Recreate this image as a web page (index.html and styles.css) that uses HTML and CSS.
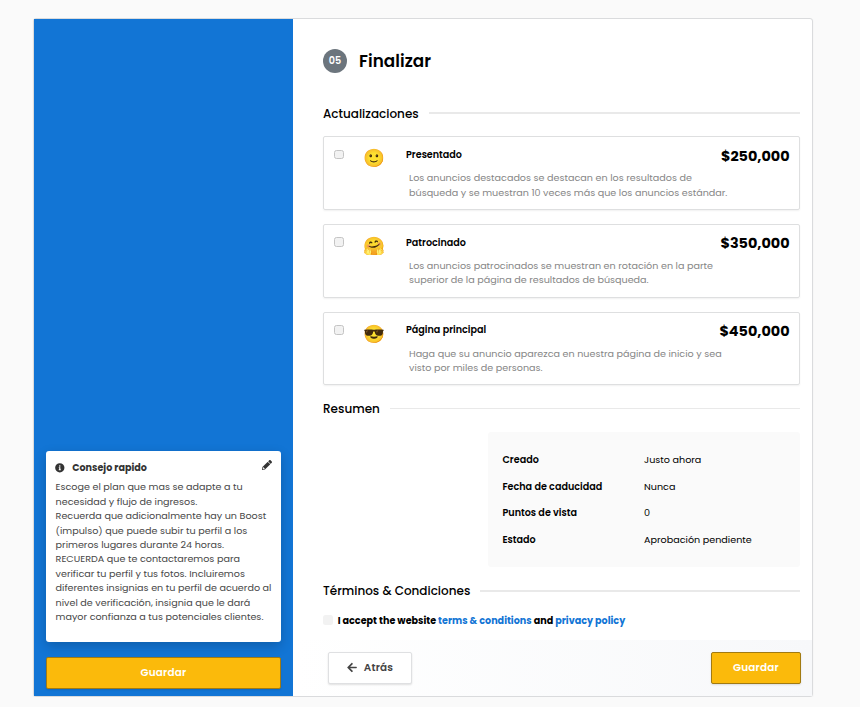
FILE: index.html
```html
<!DOCTYPE html>
<html lang="es">
<head>
<meta charset="utf-8">
<title>Finalizar</title>
<link rel="stylesheet" href="styles.css">
</head>
<body>
<div class="panel">
  <aside class="side">
    <div class="tip">
      <div class="tip-head">
        <svg class="info" viewBox="0 0 512 512"><path fill="currentColor" d="M256 8a248 248 0 1 0 0 496a248 248 0 1 0 0-496zm0 110a42 42 0 1 1 0 84a42 42 0 1 1 0-84zm56 254a12 12 0 0 1-12 12h-88a12 12 0 0 1-12-12v-24a12 12 0 0 1 12-12h12v-64h-12a12 12 0 0 1-12-12v-24a12 12 0 0 1 12-12h64a12 12 0 0 1 12 12v100h12a12 12 0 0 1 12 12z"/></svg>
        <b>Consejo rapido</b>
        <svg class="pencil" viewBox="0 0 512 512"><path fill="currentColor" d="M498 142l-46 46c-5 5-13 5-17 0L324 77c-5-5-5-12 0-17l46-46c19-19 49-19 68 0l60 60c19 19 19 49 0 68zM284 100L22 362 0 484c-3 16 12 30 28 28l122-22 262-262c5-5 5-13 0-17L301 100c-4-5-12-5-17 0zM88 424h48v36l-64 11-31-31 11-64h36v48z"/></svg>
      </div>
      <p>Escoge el plan que mas se adapte a tu<br>necesidad y flujo de ingresos.<br>Recuerda que adicionalmente hay un Boost<br>(impulso) que puede subir tu perfil a los<br>primeros lugares durante 24 horas.<br>RECUERDA que te contactaremos para<br>verificar tu perfil y tus fotos. Incluiremos<br>diferentes insignias en tu perfil de acuerdo al<br>nivel de verificación, insignia que le dará<br>mayor confianza a tus potenciales clientes.</p>
    </div>
    <button class="btn gold wide">Guardar</button>
  </aside>
  <main class="main">
    <div class="content">
      <header class="title"><span class="step">05</span><h1>Finalizar</h1></header>
      <h2 class="sec"><span>Actualizaciones</span></h2>
      <div class="plans">
        <label class="plan">
          <input type="checkbox" class="check"><span class="emoji">🙂</span>
          <span class="info-col"><b>Presentado</b><span class="desc">Los anuncios destacados se destacan en los resultados de<br>búsqueda y se muestran 10 veces más que los anuncios estándar.</span></span>
          <strong>$250,000</strong>
        </label>
        <label class="plan">
          <input type="checkbox" class="check"><span class="emoji">🤗</span>
          <span class="info-col"><b>Patrocinado</b><span class="desc">Los anuncios patrocinados se muestran en rotación en la parte<br>superior de la página de resultados de búsqueda.</span></span>
          <strong>$350,000</strong>
        </label>
        <label class="plan">
          <input type="checkbox" class="check"><span class="emoji">😎</span>
          <span class="info-col"><b>Página principal</b><span class="desc">Haga que su anuncio aparezca en nuestra página de inicio y sea<br>visto por miles de personas.</span></span>
          <strong>$450,000</strong>
        </label>
      </div>
      <h2 class="sec thin"><span>Resumen</span></h2>
      <dl class="summary">
        <dt>Creado</dt><dd>Justo ahora</dd>
        <dt>Fecha de caducidad</dt><dd>Nunca</dd>
        <dt>Puntos de vista</dt><dd>0</dd>
        <dt>Estado</dt><dd>Aprobación pendiente</dd>
      </dl>
      <h2 class="sec"><span>Términos &amp; Condiciones</span></h2>
      <label class="terms"><input type="checkbox" class="check plain"><span>I accept the website <a>terms &amp; conditions</a> and <a>privacy policy</a></span></label>
    </div>
    <footer class="foot">
      <button class="btn back"><svg viewBox="0 0 448 512"><path fill="currentColor" d="M257 444l-23 23c-9 9-24 9-33 0L7 273c-9-9-9-25 0-34L201 45c9-9 24-9 33 0l23 23c9 9 9 25-1 34L136 216h288c13 0 24 11 24 24v32c0 13-11 24-24 24H136l120 114c10 9 10 24 1 34z"/></svg>Atrás</button>
      <button class="btn gold">Guardar</button>
    </footer>
  </main>
</div>
</body>
</html>
```
FILE: styles.css
```css
* { box-sizing: border-box; }
body {
  margin: 0;
  padding: 18px 0 0 33px;
  background: #fafafa;
  color: #000;
  font: 400 9.6px/14.4px Poppins, "Open Sans", sans-serif;
}
h1, h2, p, dl, dd { margin: 0; }
b, dt { font-weight: 600; }
.panel {
  display: flex;
  width: 780px;
  height: 679px;
  border: 1px solid #dadbdd;
  border-radius: 3px;
  background: #fff;
  box-shadow: 0 1px 2px rgba(0, 0, 0, .06);
}
.side {
  display: flex;
  flex-direction: column;
  justify-content: flex-end;
  width: 259px;
  padding: 0 12px 7px;
  background: #1275d5;
}
.tip {
  height: 191px;
  margin-bottom: 15px;
  padding: 9.4px 9.6px;
  border-radius: 3px;
  background: #fff;
  color: #484848;
  box-shadow: 0 4px 12px rgba(0, 0, 0, .2);
  white-space: nowrap;
}
.tip-head { display: flex; align-items: center; height: 15px; margin-bottom: 5px; color: #333; }
.tip-head b { flex: 1; margin-left: 7.2px; line-height: 15px; font-weight: 700; }
.info { width: 9.6px; height: 9.6px; margin-left: -.2px; }
.pencil { width: 10px; height: 10px; margin: -5px -.6px 0 0; }
.btn {
  display: flex;
  align-items: center;
  justify-content: center;
  width: 90px;
  height: 32px;
  padding: 0;
  border: 1px solid #dfe0e2;
  border-radius: 2px;
  background: #fff;
  color: #444;
  font: 600 10.4px/14px Poppins, "Open Sans", sans-serif;
  letter-spacing: .2px;
  box-shadow: 0 1px 2px rgba(0, 0, 0, .12);
}
.gold { background: #fbba0b; border-color: #a17a12; color: #fff; }
.wide { width: 100%; }
.back { width: 84px; }
.back svg { width: 10px; height: 11px; margin: -2px 7px 0 0; }
.main { display: flex; flex: 1; flex-direction: column; min-width: 0; }
.content { flex: 1; padding: 30px 12px 0 30px; }
.title { display: flex; align-items: center; height: 24px; }
.step {
  width: 24px;
  height: 24px;
  margin-right: 12px;
  border-radius: 50%;
  background: #6c757d;
  color: #fff;
  font-weight: 600;
  line-height: 24px;
  text-align: center;
}
h1 { font-size: 16.8px; font-weight: 600; line-height: 24px; letter-spacing: .05px; }
.sec { display: flex; align-items: center; height: 18px; font-size: 12px; font-weight: 500; line-height: 18px; }
.sec::after { content: ""; flex: 1; height: 2px; margin-left: 10px; background: #e9e9e9; }
.thin::after { height: 1px; }
.title + .sec { margin-top: 31px; }
.title + .sec span { margin-top: 2px; }
.plans { display: grid; grid-template-columns: minmax(0, 1fr); gap: 13.9px; margin-top: 14.2px; }
.plan {
  display: flex;
  align-items: flex-start;
  height: 73.8px;
  padding: 0 9.4px 0 10px;
  border: 1px solid #dedfe0;
  border-radius: 2px;
  box-shadow: 0 1px 2px rgba(0, 0, 0, .06);
  white-space: nowrap;
}
.check {
  appearance: none;
  flex: none;
  width: 10px;
  height: 9.4px;
  margin: 12.6px 0 0;
  border: 1px solid #c4c4c4;
  border-radius: 2.5px;
  background: #f2f2f2;
}
.emoji { width: 22px; margin: 9px 0 0 19px; font-size: 17.6px; line-height: 24px; }
.info-col { flex: 1; min-width: 0; margin: 10.7px 0 0 21px; }
.info-col b { display: block; }
.desc { display: block; margin: 8.9px 0 0 3px; color: #868686; }
.plan strong { margin-top: 7.5px; font-size: 14.4px; font-weight: 700; line-height: 22px; }
.thin { margin-top: 14.2px; }
.summary {
  display: grid;
  grid-template-columns: 141.6px 1fr;
  align-content: start;
  width: 312px;
  height: 135px;
  margin: 14px 0 15px auto;
  padding: 15.5px 14.5px 0;
  border-radius: 3px;
  background: #fafafa;
  line-height: 26.6px;
}
.terms { display: flex; align-items: center; margin-top: 13px; height: 16px; font-weight: 700; }
.terms span { margin-top: 1px; }
.plain { margin: -1px 4.7px 0 0; height: 10px; border: 0; }
a { color: #1275d5; }
.foot {
  display: flex;
  align-items: flex-start;
  justify-content: space-between;
  height: 56px;
  padding: 12px 11px 0 35px;
  background: linear-gradient(90deg, #fff, #f7f8fa);
}
```
